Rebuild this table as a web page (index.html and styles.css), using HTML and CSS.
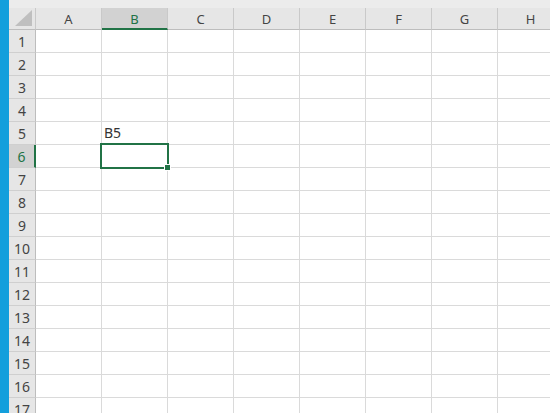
FILE: index.html
```html
<!DOCTYPE html>
<html>
<head>
<meta charset="utf-8">
<link rel="stylesheet" href="styles.css">
</head>
<body>
<div class="app">
  <div class="strip"></div>
  <div class="main">
    <div class="topbar"></div>
    <div class="sheet">
      <div class="corner"><span class="tri"></span></div>
      <div class="ch">A</div><div class="ch sel">B</div><div class="ch">C</div><div class="ch">D</div><div class="ch">E</div><div class="ch">F</div><div class="ch">G</div><div class="ch">H</div>

      <div class="rh">1</div><div class="c"></div><div class="c"></div><div class="c"></div><div class="c"></div><div class="c"></div><div class="c"></div><div class="c"></div><div class="c"></div>
      <div class="rh">2</div><div class="c"></div><div class="c"></div><div class="c"></div><div class="c"></div><div class="c"></div><div class="c"></div><div class="c"></div><div class="c"></div>
      <div class="rh">3</div><div class="c"></div><div class="c"></div><div class="c"></div><div class="c"></div><div class="c"></div><div class="c"></div><div class="c"></div><div class="c"></div>
      <div class="rh">4</div><div class="c"></div><div class="c"></div><div class="c"></div><div class="c"></div><div class="c"></div><div class="c"></div><div class="c"></div><div class="c"></div>
      <div class="rh">5</div><div class="c"></div><div class="c txt">B5</div><div class="c"></div><div class="c"></div><div class="c"></div><div class="c"></div><div class="c"></div><div class="c"></div>
      <div class="rh sel">6</div><div class="c"></div><div class="c active"><span class="box"></span><span class="handle"></span></div><div class="c"></div><div class="c"></div><div class="c"></div><div class="c"></div><div class="c"></div><div class="c"></div>
      <div class="rh">7</div><div class="c"></div><div class="c"></div><div class="c"></div><div class="c"></div><div class="c"></div><div class="c"></div><div class="c"></div><div class="c"></div>
      <div class="rh">8</div><div class="c"></div><div class="c"></div><div class="c"></div><div class="c"></div><div class="c"></div><div class="c"></div><div class="c"></div><div class="c"></div>
      <div class="rh">9</div><div class="c"></div><div class="c"></div><div class="c"></div><div class="c"></div><div class="c"></div><div class="c"></div><div class="c"></div><div class="c"></div>
      <div class="rh">10</div><div class="c"></div><div class="c"></div><div class="c"></div><div class="c"></div><div class="c"></div><div class="c"></div><div class="c"></div><div class="c"></div>
      <div class="rh">11</div><div class="c"></div><div class="c"></div><div class="c"></div><div class="c"></div><div class="c"></div><div class="c"></div><div class="c"></div><div class="c"></div>
      <div class="rh">12</div><div class="c"></div><div class="c"></div><div class="c"></div><div class="c"></div><div class="c"></div><div class="c"></div><div class="c"></div><div class="c"></div>
      <div class="rh">13</div><div class="c"></div><div class="c"></div><div class="c"></div><div class="c"></div><div class="c"></div><div class="c"></div><div class="c"></div><div class="c"></div>
      <div class="rh">14</div><div class="c"></div><div class="c"></div><div class="c"></div><div class="c"></div><div class="c"></div><div class="c"></div><div class="c"></div><div class="c"></div>
      <div class="rh">15</div><div class="c"></div><div class="c"></div><div class="c"></div><div class="c"></div><div class="c"></div><div class="c"></div><div class="c"></div><div class="c"></div>
      <div class="rh">16</div><div class="c"></div><div class="c"></div><div class="c"></div><div class="c"></div><div class="c"></div><div class="c"></div><div class="c"></div><div class="c"></div>
      <div class="rh">17</div><div class="c"></div><div class="c"></div><div class="c"></div><div class="c"></div><div class="c"></div><div class="c"></div><div class="c"></div><div class="c"></div>
    </div>
  </div>
</div>
</body>
</html>
```

FILE: styles.css
```css
html, body {
  margin: 0;
  padding: 0;
  width: 550px;
  height: 413px;
  overflow: hidden;
  background: #ffffff;
}

.app {
  display: flex;
  width: 550px;
  height: 413px;
  overflow: hidden;
  font-family: "Noto Sans", "Liberation Sans", sans-serif;
  font-size: 13px;
}

.strip {
  flex: 0 0 9px;
  background: #139fdc;
}

.main {
  flex: 1 1 auto;
  display: flex;
  flex-direction: column;
  min-width: 0;
}

.topbar {
  flex: 0 0 8px;
  background: #ececec;
}

.sheet {
  display: grid;
  grid-template-columns: 27px repeat(8, 66px);
  grid-template-rows: 22px repeat(17, 23px);
}

.corner {
  background: #e6e6e6;
  border-right: 1px solid #c9c9c9;
  border-bottom: 1px solid #bdbdbd;
  position: relative;
}

.tri {
  position: absolute;
  right: 3px;
  bottom: 3px;
  width: 17px;
  height: 16px;
  background: #bfbfbf;
  clip-path: polygon(100% 0, 100% 100%, 0 100%);
}

.ch {
  background: #e6e6e6;
  border-right: 1px solid #c9c9c9;
  border-bottom: 1px solid #bdbdbd;
  color: #444444;
  display: flex;
  align-items: center;
  justify-content: center;
  padding-top: 1px;
}

.ch.sel {
  background: #d2d2d2;
  border-bottom: 2px solid #217346;
  color: #217346;
}

.rh {
  background: #e6e6e6;
  border-right: 1px solid #bdbdbd;
  border-bottom: 1px solid #cfcfcf;
  color: #444444;
  display: flex;
  align-items: center;
  justify-content: center;
  font-size: 14px;
}

.rh.sel {
  background: #d2d2d2;
  border-right: 2px solid #217346;
  color: #217346;
}

.c {
  border-right: 1px solid #dadada;
  border-bottom: 1px solid #dadada;
}

.c.txt {
  color: #333333;
  display: flex;
  align-items: flex-end;
  padding-left: 2px;
  padding-bottom: 2px;
  font-size: 14px;
}

.c.active {
  position: relative;
  z-index: 2;
}

.box {
  position: absolute;
  left: -2px;
  top: -2px;
  width: 65px;
  height: 22px;
  border: 2px solid #217346;
}

.handle {
  position: absolute;
  right: -4px;
  bottom: -4px;
  width: 5px;
  height: 5px;
  background: #217346;
  border: 1px solid #ffffff;
}
```
